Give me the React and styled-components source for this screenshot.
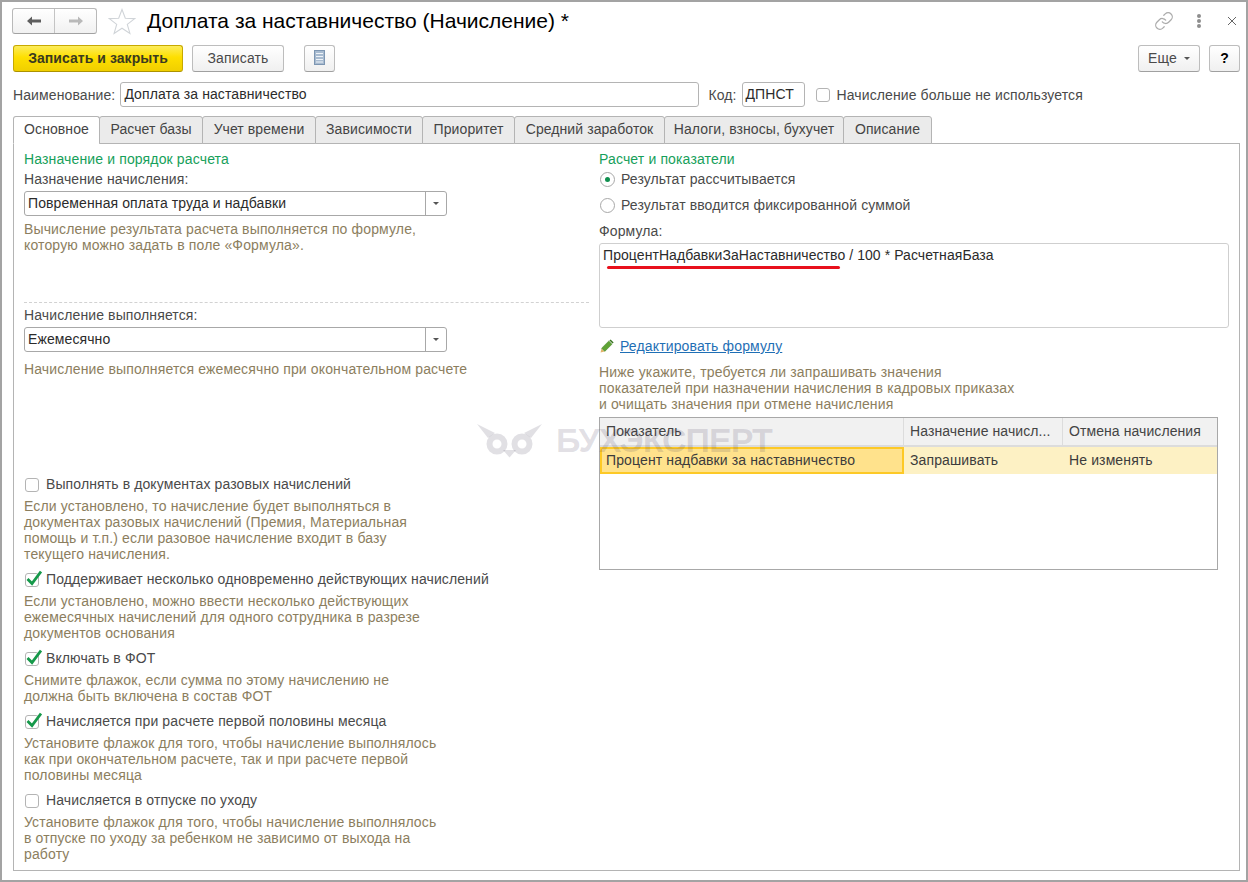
import React from 'react';
import styled, { createGlobalStyle } from 'styled-components';
import { Link as LinkIcon } from 'lucide-react';

const GlobalStyle = createGlobalStyle`
  html, body {
    margin: 0;
    padding: 0;
    background: #fff;
  }
  * {
    box-sizing: border-box;
  }
`;

const hintOne = ['Вычисление результата расчета выполняется по формуле,', 'которую можно задать в поле «Формула».'];
const hintTwo = ['Начисление выполняется ежемесячно при окончательном расчете'];
const hintRight = [
  'Ниже укажите, требуется ли запрашивать значения',
  'показателей при назначении начисления в кадровых приказах',
  'и очищать значения при отмене начисления',
];

const options = [
  {
    label: 'Выполнять в документах разовых начислений',
    checked: false,
    hint: [
      'Если установлено, то начисление будет выполняться в',
      'документах разовых начислений (Премия, Материальная',
      'помощь и т.п.) если разовое начисление входит в базу',
      'текущего начисления.',
    ],
  },
  {
    label: 'Поддерживает несколько одновременно действующих начислений',
    checked: true,
    hint: [
      'Если установлено, можно ввести несколько действующих',
      'ежемесячных начислений для одного сотрудника в разрезе',
      'документов основания',
    ],
  },
  {
    label: 'Включать в ФОТ',
    checked: true,
    hint: ['Снимите флажок, если сумма по этому начислению не', 'должна быть включена в состав ФОТ'],
  },
  {
    label: 'Начисляется при расчете первой половины месяца',
    checked: true,
    hint: [
      'Установите флажок для того, чтобы начисление выполнялось',
      'как при окончательном расчете, так и при расчете первой',
      'половины месяца',
    ],
  },
  {
    label: 'Начисляется в отпуске по уходу',
    checked: false,
    hint: [
      'Установите флажок для того, чтобы начисление выполнялось',
      'в отпуске по уходу за ребенком не зависимо от выхода на',
      'работу',
    ],
  },
];

const tabs = [
  { title: 'Основное', width: 87 },
  { title: 'Расчет базы', width: 104 },
  { title: 'Учет времени', width: 114 },
  { title: 'Зависимости', width: 108 },
  { title: 'Приоритет', width: 93 },
  { title: 'Средний заработок', width: 151 },
  { title: 'Налоги, взносы, бухучет', width: 180 },
  { title: 'Описание', width: 89 },
];

const Lines = ({ lines }) =>
  lines.map((line, i) => (
    <React.Fragment key={line}>
      {i > 0 && <br />}
      {line}
    </React.Fragment>
  ));

const Check = ({ checked }) => (
  <CheckBox>
    {checked && (
      <CheckMark viewBox="0 0 16 16">
        <path d="M1.5 9 L6 13.5 L15 1.5" fill="none" stroke="#16994a" strokeWidth="2.8" />
      </CheckMark>
    )}
  </CheckBox>
);

const Select = ({ value }) => (
  <SelectBox>
    <SelectValue>{value}</SelectValue>
    <SelectArrow>
      <Caret />
    </SelectArrow>
  </SelectBox>
);

const App = () => {
  return (
    <Window>
      <GlobalStyle />
      <TitleRow>
        <NavGroup>
          <NavButton>
            <svg width="16" height="12" viewBox="0 0 16 12">
              <path d="M1 6 L6 1.5 V4.6 H15 V7.4 H6 V10.5 Z" fill="#5e5e5e" />
            </svg>
          </NavButton>
          <NavButton $right>
            <svg width="16" height="12" viewBox="0 0 16 12">
              <path d="M15 6 L10 1.5 V4.6 H1 V7.4 H10 V10.5 Z" fill="#b9b9b9" />
            </svg>
          </NavButton>
        </NavGroup>
        <StarIcon width="28" height="27" viewBox="0 0 28 27">
          <path
            d="M14 1.5 L17.3 10.3 L26.7 10.6 L19.3 16.4 L21.9 25.4 L14 20.2 L6.1 25.4 L8.7 16.4 L1.3 10.6 L10.7 10.3 Z"
            fill="#fff"
            stroke="#d0d4d8"
            strokeWidth="1.1"
          />
        </StarIcon>
        <Title>Доплата за наставничество (Начисление) *</Title>
        <TitleActions>
          <LinkIcon size={20} color="#acacac" strokeWidth={1.5} />
          <Dots>
            <i />
            <i />
            <i />
          </Dots>
          <CloseIcon width="10" height="10" viewBox="0 0 10 10">
            <path d="M1 1 L9 9 M9 1 L1 9" stroke="#666" strokeWidth="1" />
          </CloseIcon>
        </TitleActions>
      </TitleRow>

      <Toolbar>
        <PrimaryButton>Записать и закрыть</PrimaryButton>
        <Button $width={92} $left={9}>
          Записать
        </Button>
        <Button $width={31} $left={20}>
          <svg width="11" height="15" viewBox="0 0 11 15">
            <rect x="0.5" y="0.5" width="10" height="14" fill="#a8bbd0" stroke="#7d96b2" />
            <path d="M2 3.5 H9 M2 6.5 H9 M2 9.5 H9 M2 12 H9" stroke="#eef3f8" strokeWidth="1.1" />
          </svg>
        </Button>
        <ToolbarSpacer />
        <Button $width={62}>
          Еще
          <SmallCaret />
        </Button>
        <Button $width={31} $left={9} $dark>
          ?
        </Button>
      </Toolbar>

      <NameRow>
        <Label>Наименование:</Label>
        <TextInput $width={579} $left={5}>
          Доплата за наставничество
        </TextInput>
        <Label $left={9}>Код:</Label>
        <TextInput $width={63} $left={5}>
          ДПНСТ
        </TextInput>
        <CheckRow $left={10}>
          <Check />
          <Label>Начисление больше не используется</Label>
        </CheckRow>
      </NameRow>

      <TabBar>
        {tabs.map((tab, i) => (
          <Tab key={tab.title} $active={i === 0} $width={tab.width}>
            {tab.title}
          </Tab>
        ))}
      </TabBar>

      <Panel>
        <Column>
          <SectionTitle>Назначение и порядок расчета</SectionTitle>
          <Label $top={4}>Назначение начисления:</Label>
          <SelectWrap $top={4}>
            <Select value="Повременная оплата труда и надбавки" />
          </SelectWrap>
          <Hint $top={5}>
            <Lines lines={hintOne} />
          </Hint>
          <Dashed />
          <Label $top={4}>Начисление выполняется:</Label>
          <SelectWrap $top={4}>
            <Select value="Ежемесячно" />
          </SelectWrap>
          <Hint $top={9}>
            <Lines lines={hintTwo} />
          </Hint>
          <OptionList>
            {options.map((o) => (
              <Option key={o.label}>
                <CheckRow>
                  <Check checked={o.checked} />
                  <Label>{o.label}</Label>
                </CheckRow>
                <Hint $top={6}>
                  <Lines lines={o.hint} />
                </Hint>
              </Option>
            ))}
          </OptionList>
        </Column>

        <Column>
          <SectionTitle>Расчет и показатели</SectionTitle>
          <RadioRow $top={4}>
            <Radio $on />
            <Label>Результат рассчитывается</Label>
          </RadioRow>
          <RadioRow $top={10}>
            <Radio />
            <Label>Результат вводится фиксированной суммой</Label>
          </RadioRow>
          <Label $top={10}>Формула:</Label>
          <FormulaBox>
            ПроцентНадбавкиЗаНаставничество / 100 * РасчетнаяБаза
            <RedLine />
          </FormulaBox>
          <EditRow>
            <svg width="14" height="14" viewBox="0 0 14 14">
              <path d="M0.6 13.4 L1.4 9.4 L4.6 12.6 Z" fill="#e2b46a" />
              <path d="M1.6 9.2 L8.8 2 L12 5.2 L4.8 12.4 Z" fill="#5fa335" stroke="#44802a" strokeWidth="0.5" />
              <path d="M9.4 1.4 L10.6 0.4 L13.6 3.4 L12.6 4.6 Z" fill="#3b7424" />
            </svg>
            <EditLink>Редактировать формулу</EditLink>
          </EditRow>
          <Hint $top={10}>
            <Lines lines={hintRight} />
          </Hint>
          <Table>
            <TableHead>
              <HeadCell>Показатель</HeadCell>
              <HeadCell>Назначение начисл...</HeadCell>
              <HeadCell>Отмена начисления</HeadCell>
            </TableHead>
            <TableRow>
              <ActiveCell>Процент надбавки за наставничество</ActiveCell>
              <RowCell>Запрашивать</RowCell>
              <RowCell>Не изменять</RowCell>
            </TableRow>
          </Table>
        </Column>

        <Watermark>
          <svg width="68" height="34" viewBox="0 0 68 34">
            <g fill="none" stroke="currentColor" strokeWidth="6">
              <circle cx="22" cy="20" r="7.5" />
              <circle cx="47" cy="20" r="7.5" />
            </g>
            <path d="M2 0 L20 9 L13 14 Z M67 0 L49 9 L56 14 Z M28 26 H41 L34.5 33.5 Z" fill="currentColor" />
          </svg>
          <WatermarkText>БУХЭКСПЕРТ</WatermarkText>
        </Watermark>
      </Panel>
    </Window>
  );
};

export default App;

const Window = styled.div`
  position: relative;
  display: flex;
  flex-direction: column;
  width: 1248px;
  height: 882px;
  border: 2px solid #a3a3a3;
  background: #fff;
  overflow: hidden;
  font-family: 'Liberation Sans', Arial, sans-serif;
  font-size: 14px;
  line-height: 16px;
  color: #3c3c3c;
`;

const TitleRow = styled.div`
  display: flex;
  align-items: center;
  height: 26px;
  margin: 6px 0 0 10px;
`;

const NavGroup = styled.div`
  display: flex;
  width: 85px;
  height: 26px;
  border: 1px solid #b9b9b9;
  border-bottom-color: #a2a2a2;
  border-radius: 3px;
  background: linear-gradient(#fff, #f1f1f1);
`;

const NavButton = styled.div`
  display: flex;
  flex: 1;
  align-items: center;
  justify-content: center;
  border-left: ${(p) => (p.$right ? '1px solid #c4c4c4' : 'none')};
`;

const StarIcon = styled.svg`
  margin-left: 11px;
  flex: none;
`;

const Title = styled.h1`
  margin: 0 0 0 11px;
  font-size: 21px;
  font-weight: normal;
  line-height: 26px;
  color: #000;
  white-space: nowrap;
`;

const TitleActions = styled.div`
  display: flex;
  align-items: center;
  margin-left: auto;
  margin-right: 9px;
`;

const Dots = styled.div`
  display: flex;
  flex-direction: column;
  gap: 1px;
  margin-left: 23px;

  i {
    display: block;
    width: 4px;
    height: 4px;
    border-radius: 50%;
    background: #8e8e8e;
  }
`;

const CloseIcon = styled.svg`
  margin-left: 26px;
`;

const Toolbar = styled.div`
  display: flex;
  align-items: center;
  height: 27px;
  margin: 11px 6px 0 11px;
`;

const ToolbarSpacer = styled.div`
  flex: 1;
`;

const Button = styled.div`
  display: flex;
  align-items: center;
  justify-content: center;
  width: ${(p) => p.$width}px;
  height: 27px;
  margin-left: ${(p) => p.$left || 0}px;
  padding-bottom: 2px;
  border: 1px solid #bdbdbd;
  border-bottom-color: #a0a0a0;
  border-radius: 3px;
  background: linear-gradient(#fff, #f0f0f0);
  color: ${(p) => (p.$dark ? '#000' : '#4a4a4a')};
  font-weight: ${(p) => (p.$dark ? 'bold' : 'normal')};
  letter-spacing: 0.15px;
`;

const PrimaryButton = styled.div`
  display: flex;
  align-items: center;
  justify-content: center;
  width: 170px;
  height: 27px;
  padding-bottom: 2px;
  border: 1px solid #c7a900;
  border-bottom-color: #ac9200;
  border-radius: 3px;
  background: linear-gradient(#fcec5c, #fedf00 45%, #f0cf00);
  color: #3a3a20;
  font-weight: bold;
  letter-spacing: 0.05px;
`;

const SmallCaret = styled.span`
  display: inline-block;
  width: 0;
  height: 0;
  margin: 2px 0 0 7px;
  border-left: 3px solid transparent;
  border-right: 3px solid transparent;
  border-top: 3px solid #555;
`;

const NameRow = styled.div`
  display: flex;
  align-items: center;
  height: 25px;
  margin: 10px 0 0 11px;
`;

const Label = styled.div`
  margin-top: ${(p) => p.$top || 0}px;
  margin-left: ${(p) => p.$left || 0}px;
  color: #4a4a4a;
  letter-spacing: 0.11px;
  white-space: nowrap;
`;

const TextInput = styled.div`
  flex: none;
  width: ${(p) => p.$width}px;
  height: 25px;
  margin-left: ${(p) => p.$left || 0}px;
  padding: 3px 0 0 3px;
  border: 1px solid #b4b4b4;
  border-radius: 3px;
  color: #2b2b2b;
  letter-spacing: 0.1px;
`;

const CheckRow = styled.div`
  display: flex;
  align-items: center;
  margin-left: ${(p) => p.$left || 0}px;
`;

const CheckBox = styled.span`
  position: relative;
  flex: none;
  width: 14px;
  height: 14px;
  margin: 1px 7px 0 1px;
  border: 1px solid #b4b4b4;
  border-radius: 3px;
  background: #fff;
`;

const CheckMark = styled.svg`
  position: absolute;
  left: 0;
  top: -4px;
  width: 16px;
  height: 16px;
`;

const TabBar = styled.div`
  display: flex;
  height: 28px;
  margin: 9px 0 -1px 11px;
  position: relative;
  z-index: 1;
`;

const Tab = styled.div`
  display: flex;
  flex: none;
  align-items: center;
  justify-content: center;
  width: ${(p) => p.$width}px;
  height: 28px;
  padding-bottom: 2px;
  margin-left: ${(p) => (p.$active ? 0 : '-1px')};
  border: 1px solid #b4b4b4;
  border-bottom-color: ${(p) => (p.$active ? '#fff' : '#b4b4b4')};
  border-radius: 3px 3px 0 0;
  background: ${(p) => (p.$active ? '#fff' : '#ebebeb')};
  color: #444;
  letter-spacing: 0.08px;
`;

const Panel = styled.div`
  position: relative;
  display: grid;
  grid-template-columns: 565px 630px;
  column-gap: 10px;
  flex: 1;
  margin: 0 6px 9px 11px;
  padding: 7px 10px 0;
  border: 1px solid #b4b4b4;
`;

const Column = styled.div`
  display: flex;
  flex-direction: column;
  align-items: flex-start;
  min-width: 0;
`;

const SectionTitle = styled.div`
  color: #16a05a;
  letter-spacing: 0.14px;
`;

const SelectWrap = styled.div`
  margin-top: ${(p) => p.$top || 0}px;
`;

const SelectBox = styled.div`
  display: flex;
  width: 423px;
  height: 25px;
  border: 1px solid #a8a8a8;
  border-radius: 3px;
  background: #fff;
`;

const SelectValue = styled.div`
  flex: 1;
  padding: 3px 0 0 3px;
  color: #2b2b2b;
  letter-spacing: 0.1px;
`;

const SelectArrow = styled.div`
  display: flex;
  align-items: center;
  justify-content: center;
  width: 21px;
  border-left: 1px solid #a8a8a8;
`;

const Caret = styled.span`
  width: 0;
  height: 0;
  border-left: 3px solid transparent;
  border-right: 3px solid transparent;
  border-top: 3px solid #555;
`;

const Hint = styled.div`
  margin-top: ${(p) => p.$top || 0}px;
  color: #8c7e5e;
  letter-spacing: 0.14px;
  white-space: nowrap;
`;

const Dashed = styled.div`
  width: 100%;
  margin-top: 49px;
  border-top: 1px dashed #d2d2d2;
`;

const OptionList = styled.div`
  display: flex;
  flex-direction: column;
  gap: 9px;
  margin-top: 99px;
`;

const Option = styled.div`
  display: flex;
  flex-direction: column;
`;

const RadioRow = styled.div`
  display: flex;
  align-items: center;
  gap: 6px;
  margin-top: ${(p) => p.$top || 0}px;
`;

const Radio = styled.span`
  position: relative;
  flex: none;
  width: 15px;
  height: 15px;
  margin-left: 1px;
  border: 1px solid #a8a8a8;
  border-radius: 50%;
  background: #fff;

  &::after {
    content: '';
    display: ${(p) => (p.$on ? 'block' : 'none')};
    position: absolute;
    left: 4px;
    top: 4px;
    width: 5px;
    height: 5px;
    border-radius: 50%;
    background: #0f8f4f;
  }
`;

const FormulaBox = styled.div`
  position: relative;
  width: 630px;
  height: 85px;
  margin-top: 4px;
  padding: 3px 0 0 3px;
  border: 1px solid #cfcfcf;
  border-radius: 3px;
  color: #2b2b2b;
  letter-spacing: 0.07px;
`;

const RedLine = styled.span`
  position: absolute;
  left: 7px;
  top: 22px;
  width: 233px;
  height: 3px;
  border-radius: 2px;
  background: #e8101c;
`;

const EditRow = styled.div`
  display: flex;
  align-items: center;
  gap: 6px;
  margin: 10px 0 0 1px;
`;

const EditLink = styled.a`
  color: #1f6fb5;
  letter-spacing: 0.14px;
  text-decoration: underline;
`;

const Table = styled.div`
  width: 619px;
  height: 153px;
  margin-top: 5px;
  border: 1px solid #a8a8a8;
`;

const TableHead = styled.div`
  display: grid;
  grid-template-columns: 304px 159px 1fr;
  height: 29px;
  background: #f1f1f1;
`;

const HeadCell = styled.div`
  padding: 5px 0 0 6px;
  border-right: 1px solid #dcdcdc;
  border-bottom: 2px solid #dcdcdc;
  color: #444;
  letter-spacing: 0.08px;
  white-space: nowrap;
  overflow: hidden;

  &:last-child {
    border-right: none;
  }
`;

const TableRow = styled.div`
  display: grid;
  grid-template-columns: 304px 159px 1fr;
  height: 27px;
  background: #fdf1c4;
  letter-spacing: 0.12px;
`;

const RowCell = styled.div`
  padding: 5px 0 0 6px;
  color: #3c3c3c;
`;

const ActiveCell = styled.div`
  padding: 3px 0 0 4px;
  border: 2px solid #fdc926;
  background: #ffe28c;
  color: #3c3c3c;
`;

const Watermark = styled.div`
  position: absolute;
  left: 461px;
  top: 280px;
  display: flex;
  align-items: center;
  gap: 13px;
  color: rgba(70, 60, 90, 0.16);
  pointer-events: none;
`;

const WatermarkText = styled.span`
  margin-top: -2px;
  font-size: 34px;
  line-height: 34px;
  font-weight: bold;
  letter-spacing: -1px;
`;
